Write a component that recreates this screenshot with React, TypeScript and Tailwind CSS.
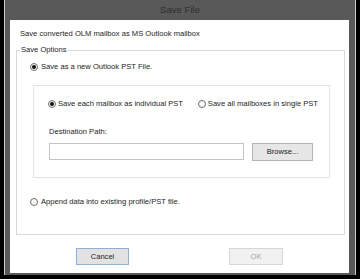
import React from "react";

const font = { fontFamily: '"Liberation Sans", Arial, sans-serif' };

function Radio({ checked }: { checked?: boolean }) {
  return (
    <span className="w-[8px] h-[8px] rounded-full border border-[#6f6f6f] bg-[#f8f8f8] flex items-center justify-center shrink-0">
      {checked && <span className="w-[4px] h-[4px] rounded-full bg-[#111]" />}
    </span>
  );
}

export default function App() {
  return (
    <div
      className="w-[360px] h-[279px] bg-black flex px-[4px] pb-[4px] text-[7.6px] leading-[10px] text-[#1e1e1e]"
      style={font}
    >
      <div className="flex-1 flex flex-col bg-[#595959] border-x border-[#c8c8c8]">
        <div className="h-[20px] flex items-center justify-center text-[9.6px] text-[#2e2e2e]">
          Save File
        </div>
        <div className="flex-1 bg-white ml-[5px] mr-[6px] mb-[2px] flex flex-col">
          <div className="pt-[9px] pl-[10px] h-[19px]">Save converted OLM mailbox as MS Outlook mailbox</div>
          <fieldset className="mt-[6px] ml-[6px] w-[329px] h-[190px] border border-[#d9d9d9] flex flex-col">
            <legend className="ml-[3px] px-[1px] h-[10px]">Save Options</legend>
            <div className="mt-[7px] ml-[13px] flex items-center gap-[3px] h-[10px]">
              <Radio checked />
              <span>Save as a new Outlook PST File.</span>
            </div>
            <div className="mt-[13px] ml-[16px] w-[297px] h-[93px] border border-[#e4e4e4] flex flex-col">
              <div className="mt-[13px] h-[10px] flex items-center">
                <div className="ml-[14px] flex items-center gap-[2px]">
                  <Radio checked />
                  <span>Save each mailbox as individual PST</span>
                </div>
                <div className="ml-auto mr-[11px] flex items-center gap-[2px]">
                  <Radio />
                  <span>Save all mailboxes in single PST</span>
                </div>
              </div>
              <div className="mt-[18px] ml-[15px] h-[10px]">Destination Path:</div>
              <div className="mt-[6px] ml-[15px] flex items-start">
                <div className="w-[195px] h-[17px] border border-[#c4c4c4] bg-white" />
                <button className="ml-[8px] w-[61px] h-[18px] border border-[#b4b4b4] bg-[#e6e6e6] flex items-center justify-center text-[#222]">
                  Browse...
                </button>
              </div>
            </div>
            <div className="mt-[19px] ml-[13px] flex items-center gap-[3px] h-[10px]">
              <Radio />
              <span>Append data into existing profile/PST file.</span>
            </div>
          </fieldset>
          <div className="mt-[13px] flex h-[17px]">
            <button className="ml-[66px] w-[53px] h-[17px] border border-[#86b1e3] bg-[#e2e2e2] flex items-center justify-center text-[#222]">
              Cancel
            </button>
            <button className="ml-[100px] w-[54px] h-[17px] border border-[#d6d6d6] bg-[#f1f1f1] flex items-center justify-center text-[#a5a5a5]">
              OK
            </button>
          </div>
        </div>
      </div>
    </div>
  );
}
